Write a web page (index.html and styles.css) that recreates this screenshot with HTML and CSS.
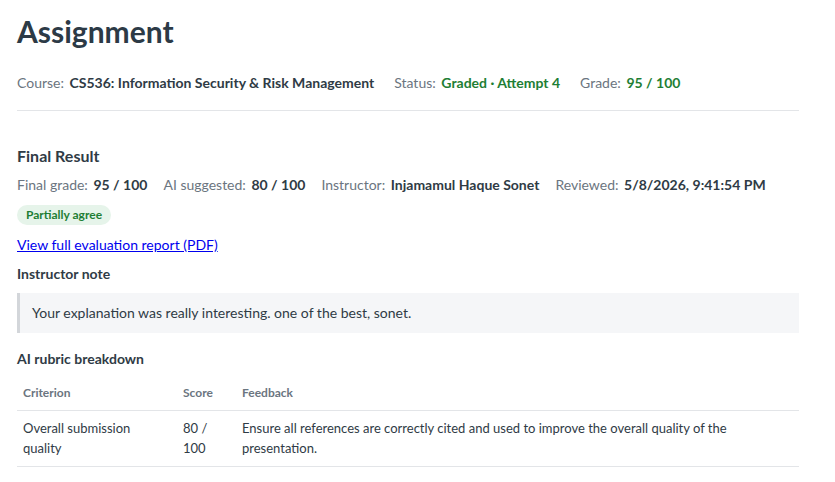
FILE: index.html
```html
<!DOCTYPE html>
<html lang="en">
<head>
    <meta charset="UTF-8">
    <meta name="viewport" content="width=device-width, initial-scale=1.0">
    <title>Assignment</title>
    <link rel="stylesheet" href="styles.css">
</head>
<body>
    <div class="page">
        <h1 class="title">Assignment</h1>

        <div class="meta">
            <span class="item"><span class="label">Course:</span> <b>CS536: Information Security &amp; Risk Management</b></span>
            <span class="item"><span class="label">Status:</span> <b class="ok">Graded · Attempt 4</b></span>
            <span class="item"><span class="label">Grade:</span> <b class="ok">95 / 100</b></span>
        </div>

        <hr class="divider">

        <h2 class="section-title">Final Result</h2>
        <div class="meta result">
            <span class="item"><span class="label">Final grade:</span> <b>95 / 100</b></span>
            <span class="item"><span class="label">AI suggested:</span> <b>80 / 100</b></span>
            <span class="item"><span class="label">Instructor:</span> <b>Injamamul Haque Sonet</b></span>
            <span class="item"><span class="label">Reviewed:</span> <b>5/8/2026, 9:41:54 PM</b></span>
        </div>

        <span class="badge">Partially agree</span>

        <a class="report" href="#">View full evaluation report (PDF)</a>

        <h3 class="sub-title">Instructor note</h3>
        <div class="note">Your explanation was really interesting. one of the best, sonet.</div>

        <h3 class="sub-title rubric-title">AI rubric breakdown</h3>
        <table class="rubric">
            <thead>
                <tr>
                    <th class="col-criterion">Criterion</th>
                    <th class="col-score">Score</th>
                    <th>Feedback</th>
                </tr>
            </thead>
            <tbody>
                <tr>
                    <td>Overall submission quality</td>
                    <td>80 / 100</td>
                    <td>Ensure all references are correctly cited and used to improve the overall quality of the presentation.</td>
                </tr>
            </tbody>
        </table>
    </div>
</body>
</html>
```

FILE: styles.css
```css
body {
    margin: 0;
    background: #fff;
    font-family: Lato, "Open Sans", sans-serif;
    color: #2f3b45;
}

.page {
    width: 782px;
    padding: 12px 0 0 17px;
}

.title {
    margin: 0;
    font-size: 30px;
    font-weight: 700;
    line-height: 38px;
    color: #2c3a46;
}

.meta {
    display: flex;
    flex-wrap: wrap;
    gap: 20px;
    margin-top: 23px;
    font-size: 14px;
    line-height: 20px;
}

.label {
    color: #6b7580;
    margin-right: 2px;
}

.meta b {
    font-weight: 700;
    color: #2f3b45;
}

.meta b.ok {
    color: #1e7e34;
}

.divider {
    margin: 17px 0 0;
    border: 0;
    border-top: 1px solid #e3e5e8;
}

.section-title {
    margin: 35px 0 0;
    font-size: 16px;
    font-weight: 700;
    line-height: 20px;
}

.result {
    margin-top: 9px;
    gap: 16px;
}

.badge {
    display: inline-block;
    margin-top: 10px;
    padding: 0 9px;
    height: 20px;
    line-height: 20px;
    border-radius: 10px;
    background: #e6f4ea;
    color: #1e7e34;
    font-size: 12px;
    font-weight: 700;
}

.report {
    display: block;
    width: max-content;
    margin-top: 10px;
    font-size: 14px;
    line-height: 20px;
    color: #0000ee;
}

.sub-title {
    margin: 9px 0 0;
    font-size: 14px;
    font-weight: 700;
    line-height: 20px;
}

.note {
    margin-top: 9px;
    padding: 10px 12px;
    background: #f5f6f8;
    border-left: 3px solid #d3d6da;
    font-size: 14px;
    line-height: 20px;
}

.rubric-title {
    margin-top: 16px;
}

.rubric {
    width: 100%;
    margin-top: 8px;
    border-collapse: collapse;
    font-size: 13px;
    line-height: 20px;
}

.rubric th {
    text-align: left;
    font-size: 12px;
    font-weight: 700;
    color: #6b7580;
    padding: 6px 6px 7px;
    border-bottom: 1px solid #e3e5e8;
}

.rubric td {
    vertical-align: top;
    padding: 7px 6px 8px;
    border-bottom: 1px solid #e3e5e8;
}

.col-criterion {
    width: 148px;
}

.col-score {
    width: 47px;
}
```
